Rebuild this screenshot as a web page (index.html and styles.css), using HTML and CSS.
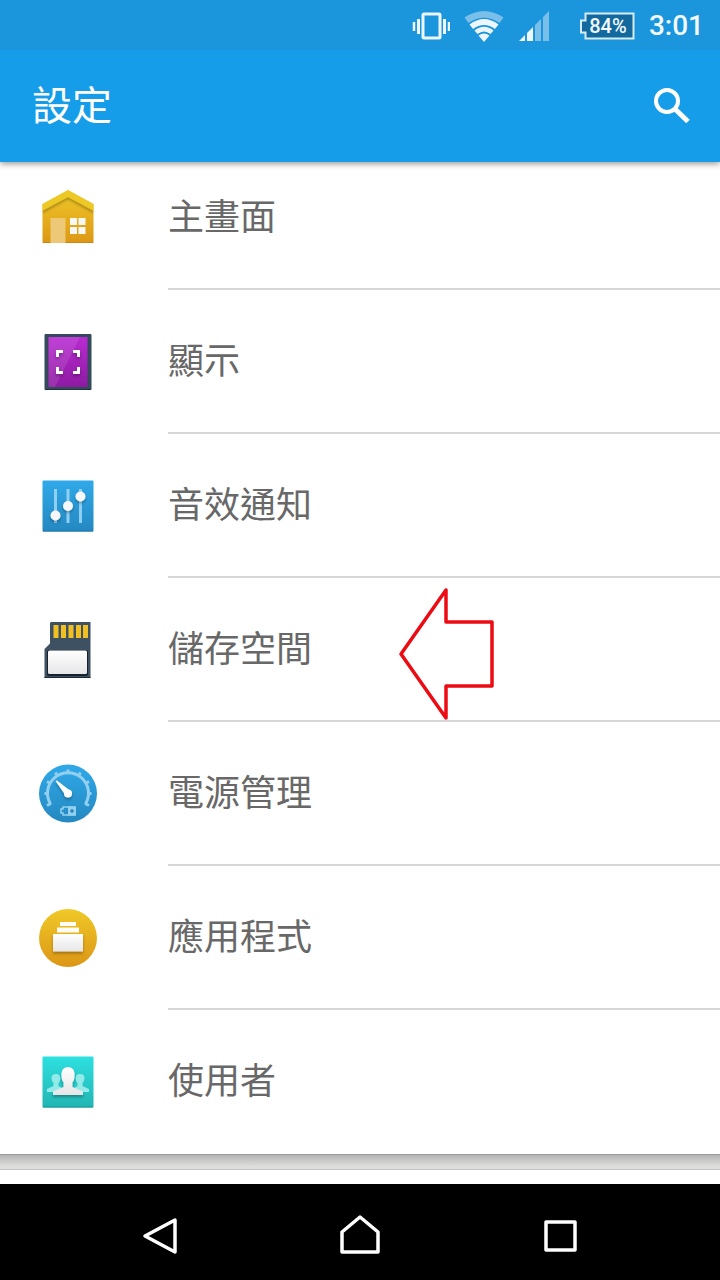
FILE: index.html
```html
<!DOCTYPE html>
<html lang="zh-Hant">
<head>
    <meta charset="UTF-8">
    <meta name="viewport" content="width=device-width, initial-scale=1.0">
    <title>設定</title>
    <link rel="stylesheet" href="styles.css">
</head>
<body>
    <div class="screen">
        <div class="status-bar">
            <svg class="vibrate" width="38" height="32" viewBox="0 0 38 32" aria-hidden="true">
                <rect x="11" y="4" width="17" height="24" rx="1" fill="none" stroke="#eef6fd" stroke-width="3"/>
                <path d="M6.5 9v15M32.5 9v15" stroke="#eef6fd" stroke-width="3"/>
                <path d="M2 12v9M37 12v9" stroke="#eef6fd" stroke-width="2.5"/>
            </svg>
            <svg class="wifi" width="40" height="32" viewBox="0 0 40 32" aria-hidden="true">
                <path d="M.5 7.5Q20-5.5 39.5 7.5L35.5 13Q20 2.500 4.5 13z" fill="#79bfea"/>
                <path d="M5.5 14.5Q20 3.500 34.5 14.5L31 19Q20 11 9 19z" fill="#eef6fd"/>
                <path d="M10.5 20.5Q20 13 29.5 20.5L26.5 24Q20 19 13.5 24z" fill="#eef6fd"/>
                <path d="M14.5 25.5Q20 21.5 25.5 25.5L20 32z" fill="#eef6fd"/>
            </svg>
            <svg class="signal" width="30" height="32" viewBox="0 0 30 32" aria-hidden="true">
                <path d="M0 31L6 25V31zM8 23L14 17V31H8z" fill="#eef6fd"/>
                <path d="M16 15L22 9V31H16zM24 7L30 1V31H24z" fill="#79bfea"/>
            </svg>
            <div class="battery">
                <svg class="battery-shape" width="56" height="28" viewBox="0 0 56 28" aria-hidden="true">
                    <path d="M6.5 1.5H54.5V26.5H6.5V20.5H2V8.5H6.5z" fill="#12699d" stroke="#d8ebf8" stroke-width="2"/>
                </svg>
                <span class="battery-level">84%</span>
            </div>
            <span class="clock">3:01</span>
        </div>

        <header class="app-bar">
            <h1>設定</h1>
            <button type="button" class="search" aria-label="搜尋">
                <svg width="38" height="38" viewBox="0 0 38 38">
                    <circle cx="15" cy="14" r="11" fill="none" stroke="#fff" stroke-width="4"/>
                    <path d="M22.5 21.5L36 34.5" stroke="#fff" stroke-width="5"/>
                </svg>
            </button>
        </header>

        <main class="settings">
            <ul class="list">
                <li>
                    <a class="row" href="#home">
                        <svg class="icon" viewBox="0 0 80 80" aria-hidden="true">
                            <defs>
                                <linearGradient id="gold" x1="0" y1="0" x2="0" y2="1">
                                    <stop offset="0" stop-color="#efc928"/>
                                    <stop offset="1" stop-color="#dc9615"/>
                                </linearGradient>
                                <linearGradient id="blue" x1="0" y1="0" x2="0" y2="1">
                                    <stop offset="0" stop-color="#30a9e9"/>
                                    <stop offset="1" stop-color="#2488c0"/>
                                </linearGradient>
                                <linearGradient id="teal" x1="0" y1="0" x2="0" y2="1">
                                    <stop offset="0" stop-color="#2de0e0"/>
                                    <stop offset="1" stop-color="#22b5b2"/>
                                </linearGradient>
                                <linearGradient id="purple" x1="0" y1="0" x2="0" y2="1">
                                    <stop offset="0" stop-color="#b92bd2"/>
                                    <stop offset="1" stop-color="#8e1aa2"/>
                                </linearGradient>
                                <linearGradient id="paper" x1="0" y1="0" x2="0" y2="1">
                                    <stop offset="0" stop-color="#ffffff"/>
                                    <stop offset="1" stop-color="#e6e6e8"/>
                                </linearGradient>
                                <filter id="drop" x="-30%" y="-30%" width="160%" height="170%">
                                    <feDropShadow dx="0" dy="2" stdDeviation="1.5" flood-color="#000" flood-opacity=".3"/>
                                </filter>
                                <clipPath id="houseClip">
                                    <path d="M38 12L63.5 26V64.5Q63.5 65 62.5 65H13.5Q12.5 65 12.5 64.5V26z"/>
                                </clipPath>
                            </defs>
                            <g clip-path="url(#houseClip)">
                                <rect x="12" y="12" width="52" height="54" fill="url(#gold)"/>
                                <path d="M38 12L64 26V33L38 19L12 33V26z" fill="#edc927" filter="url(#drop)"/>
                                <path d="M13 64.5H63" stroke="#cb8612"/>
                            </g>
                            <rect x="20.5" y="40" width="15" height="25" fill="#edc877"/>
                            <path d="M40 40h7v7H40zM48.5 40h7v7H48.500zM40 49h7v7H40zM48.5 49h7v7H48.500z" fill="#f7f7f3"/>
                        </svg>
                        <span class="label">主畫面</span>
                    </a>
                </li>
                <li>
                    <a class="row" href="#display">
                        <svg class="icon" viewBox="0 0 80 80" aria-hidden="true">
                            <rect x="14.5" y="12" width="47" height="56" rx="1" fill="#34495a"/>
                            <path d="M15 67.5H61" stroke="#20303e"/>
                            <rect x="18.5" y="15" width="39" height="50" fill="url(#purple)"/>
                            <path d="M18.5 15H50L25 65H18.5z" fill="#fff" opacity=".1"/>
                            <path d="M27.5 35V29.5H33M43 29.5H48.5V35M48.5 45V50.5H43M33 50.5H27.5V45" fill="none" stroke="#fff" stroke-width="3" filter="url(#drop)"/>
                        </svg>
                        <span class="label">顯示</span>
                    </a>
                </li>
                <li>
                    <a class="row" href="#sound">
                        <svg class="icon" viewBox="0 0 80 80" aria-hidden="true">
                            <rect x="12.5" y="14.5" width="51" height="51" rx="1" fill="url(#blue)"/>
                            <path d="M13 65H63" stroke="#1d77aa"/>
                            <path d="M25.5 23V57M38 23V57M50.5 23V57" stroke="#8fd0f2" stroke-width="3"/>
                            <g fill="#f5f7f8" filter="url(#drop)">
                                <circle cx="25.5" cy="49.5" r="5"/>
                                <circle cx="38" cy="40" r="5"/>
                                <circle cx="50.5" cy="30.5" r="5"/>
                            </g>
                        </svg>
                        <span class="label">音效通知</span>
                    </a>
                </li>
                <li class="marked">
                    <a class="row" href="#storage">
                        <svg class="icon" viewBox="0 0 80 80" aria-hidden="true">
                            <path d="M21 12H60.5V68H14.5V39L20 33.5V13z" fill="#3e5163"/>
                            <path d="M14.5 67.5H60.5" stroke="#1a2833"/>
                            <path d="M23.5 15h5v13h-5zM31 15h5v13h-5zM38.5 15h5v13h-5zM46 15h5v13h-5zM53 15h5v13h-5z" fill="#f0c022"/>
                            <rect x="17" y="40" width="41" height="26" rx="2" fill="#16222d"/>
                            <rect x="18" y="40.5" width="39" height="23.5" rx="1.5" fill="url(#paper)"/>
                        </svg>
                        <span class="label">儲存空間</span>
                    </a>
                    <svg class="arrow" width="100" height="136" viewBox="0 0 100 136" aria-hidden="true">
                        <path d="M3 68L48 4V36H94V100H48V132z" fill="none" stroke="#ed0b13" stroke-width="3.5" stroke-linejoin="round"/>
                    </svg>
                </li>
                <li>
                    <a class="row" href="#power">
                        <svg class="icon" viewBox="0 0 80 80" aria-hidden="true">
                            <circle cx="38" cy="39.5" r="29" fill="url(#blue)"/>
                            <g fill="none" stroke="#93d0ef">
                                <path d="M20.5 50A20.5 20.5 0 1 1 55.5 50" stroke-width="3"/>
                                <path d="M21 49.5L17 51.5M18 39.5H14.5M20.5 29.5L17 27.5M27.5 22L25.5 18.5M38 19.5V15.5M48.5 22L50.5 18.5M55.5 29.5L59 27.5M58 39.5H61.5M55 49.5L59 51.5" stroke-width="3"/>
                                <path d="M45 53H33V55H31V59H33V61H45z" stroke-width="1.5"/>
                            </g>
                            <rect x="38" y="52.5" width="8" height="9" fill="#93d0ef"/>
                            <path d="M42 55V59M40 57H44" stroke="#2488c0" stroke-width="1.5"/>
                            <g fill="#fff" filter="url(#drop)">
                                <path d="M25.5 27L27 26.5L40.5 37L36 42z"/>
                                <circle cx="38" cy="39.5" r="4"/>
                            </g>
                        </svg>
                        <span class="label">電源管理</span>
                    </a>
                </li>
                <li>
                    <a class="row" href="#apps">
                        <svg class="icon" viewBox="0 0 80 80" aria-hidden="true">
                            <circle cx="38" cy="40" r="29" fill="url(#gold)"/>
                            <rect x="30" y="24" width="16" height="4" fill="#fffdf5"/>
                            <rect x="27" y="29.5" width="22" height="5" fill="#fffdf5"/>
                            <rect x="23" y="36" width="30" height="17.5" fill="url(#paper)" filter="url(#drop)"/>
                        </svg>
                        <span class="label">應用程式</span>
                    </a>
                </li>
                <li>
                    <a class="row" href="#users">
                        <svg class="icon" viewBox="0 0 80 80" aria-hidden="true">
                            <rect x="12.5" y="14.5" width="51" height="51" rx="1" fill="url(#teal)"/>
                            <path d="M13 65H63" stroke="#189b98"/>
                            <path d="M17 50V47L23.5 44V41Q21.5 39 21.5 36Q21.5 32 26 32Q30 32 30.5 36Q30.5 39 28.5 41V44L34 47V50zM59 50V47L52.5 44V41Q54.5 39 54.5 36Q54.5 32 50 32Q46 32 45.5 36Q45.5 39 47.5 41V44L42 47V50z" fill="#93ebe9"/>
                            <path d="M23 53V49.5L33.5 45V40.5Q31.5 38 31.5 35Q30.5 25 38 25Q45.5 25 44.5 35Q44.5 38 42.5 40.5V45L53 49.5V53z" fill="url(#paper)" filter="url(#drop)"/>
                        </svg>
                        <span class="label">使用者</span>
                    </a>
                </li>
            </ul>
            <div class="section-gap"></div>
            <div class="next-section"></div>
        </main>

        <nav class="nav-bar">
            <button type="button" aria-label="返回">
                <svg width="44" height="44" viewBox="0 0 44 44">
                    <path d="M37 6V38L7 22z" fill="none" stroke="#fff" stroke-width="3.5" stroke-linejoin="round"/>
                </svg>
            </button>
            <button type="button" aria-label="主頁">
                <svg width="44" height="44" viewBox="0 0 44 44">
                    <path d="M4 38V18L22 3L40 18V38z" fill="none" stroke="#fff" stroke-width="3.5" stroke-linejoin="round"/>
                </svg>
            </button>
            <button type="button" aria-label="最近使用">
                <svg width="44" height="44" viewBox="0 0 44 44">
                    <rect x="8" y="8" width="29" height="28" fill="none" stroke="#fff" stroke-width="3.5" stroke-linejoin="round"/>
                </svg>
            </button>
        </nav>
    </div>
</body>
</html>
```
FILE: styles.css
```css
* {
    box-sizing: border-box;
}
body {
    font-family: Roboto, "Noto Sans CJK TC", sans-serif;
    background-color: #fff;
    margin: 0;
}
button {
    background: none;
    border: 0;
    padding: 0;
}
svg {
    display: block;
}
.screen {
    display: flex;
    flex-direction: column;
    min-height: 100vh;
}

/* status bar */
.status-bar {
    display: flex;
    align-items: center;
    justify-content: flex-end;
    height: 50px;
    padding-top: 1px;
    padding-right: 16px;
    background-color: #1b95db;
    color: #f2f8fd;
    position: relative;
    z-index: 2;
}
.wifi {
    margin-left: 14px;
}
.signal {
    margin-left: 15px;
}
.battery {
    position: relative;
    width: 56px;
    height: 28px;
    margin-left: 30px;
}
.battery-level {
    position: absolute;
    top: 0;
    left: 6px;
    right: 4px;
    line-height: 28px;
    font-size: 20px;
    font-weight: 500;
    text-align: center;
}
.clock {
    margin-left: 14px;
    font-size: 28px;
    font-weight: 500;
}

/* title bar */
.app-bar {
    display: flex;
    align-items: center;
    justify-content: space-between;
    height: 112px;
    padding: 0 30px 0 32px;
    background-color: #159de9;
    color: #fff;
    box-shadow: 0 2px 6px rgba(0, 0, 0, 0.4);
    position: relative;
    z-index: 1;
}
.app-bar h1 {
    margin: 0;
    padding-top: 2px;
    font-size: 40px;
    font-weight: 400;
    line-height: 56px;
}

/* the list is scrolled a little under the title bar */
.settings {
    display: flex;
    flex-direction: column;
    flex: 1;
    margin-top: -16px;
}
.list {
    list-style: none;
    margin: 0;
    padding: 0;
}
.marked {
    position: relative;
}
.row {
    display: flex;
    align-items: center;
    padding-left: 30px;
    color: #686868;
    text-decoration: none;
}
.icon {
    flex: none;
    width: 80px;
    height: 80px;
    margin-right: 58px;
}
.label {
    flex: 1;
    height: 144px;
    line-height: 144px;
    font-size: 36px;
    border-bottom: 2px solid #d6d6d6;
}
.list li:last-child .label {
    border-bottom-color: transparent;
}
.arrow {
    position: absolute;
    top: 8px;
    left: 398px;
}
.section-gap {
    height: 16px;
    background: linear-gradient(#b4b4b4, #dededd 80%);
    border-top: 1px solid #9b9b9b;
    border-bottom: 1px solid #c4c4c4;
}
.next-section {
    flex: 1;
    min-height: 14px;
}

/* system buttons */
.nav-bar {
    display: flex;
    height: 96px;
    padding: 0 60px;
    background-color: #000;
}
.nav-bar button {
    display: flex;
    flex: 1;
    align-items: center;
    justify-content: center;
    padding-top: 8px;
}
```
